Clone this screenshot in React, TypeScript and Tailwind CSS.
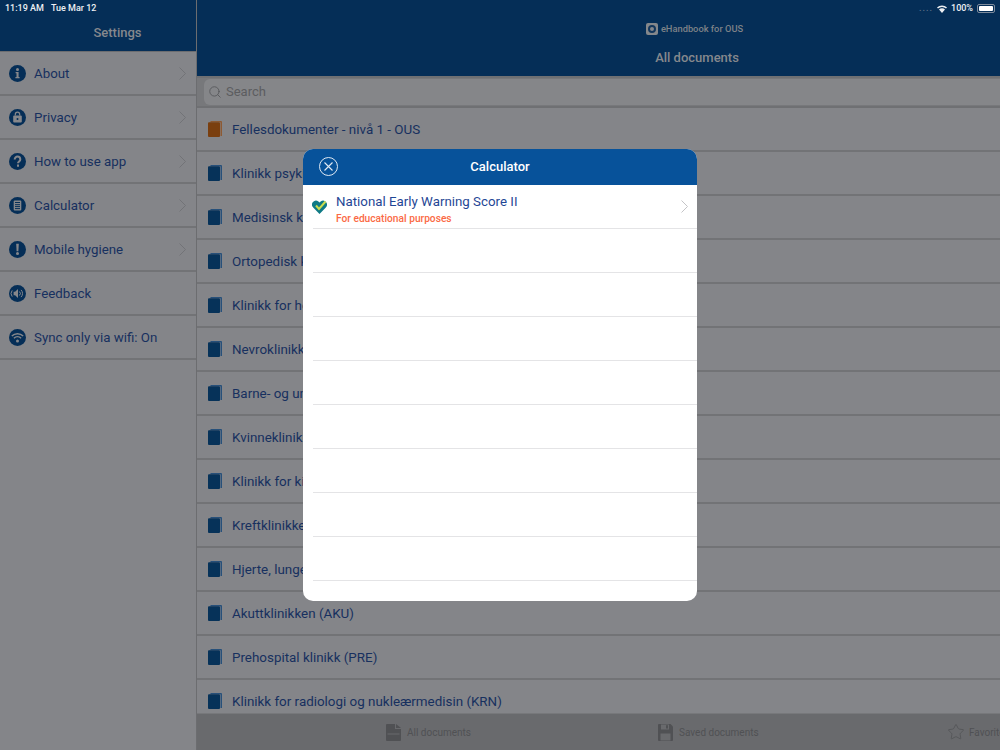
import { ReactNode } from 'react';
import { Search, Star } from 'lucide-react';

const font = { fontFamily: 'Roboto, "Liberation Sans", sans-serif' };

const InfoGlyph = () => (
	<>
		<circle cx="8.5" cy="4.6" r="1.5" fill="#86878b" />
		<path d="M6.6 7h3v4.9h1v1.3H6.4v-1.3h1.1V8.3h-.9z" fill="#86878b" />
	</>
);
const LockGlyph = () => (
	<>
		<rect x="4.2" y="6.6" width="8.6" height="6.8" rx="1" fill="#86878b" />
		<path d="M6.300 6.600V5.400a2.200 2.200 0 0 1 4.400 0V6.600" fill="none" stroke="#86878b" strokeWidth="1.2" />
		<circle cx="8.5" cy="10" r="1" fill="#052e57" />
	</>
);
const HelpGlyph = () => (
	<path
		d="M5.700 6.400a2.800 2.800 0 0 1 5.600 0c0 2-2.300 2-2.300 3.900M9 11.500v2.200"
		fill="none"
		stroke="#86878b"
		strokeWidth="2"
	/>
);
const CalcGlyph = () => (
	<>
		<rect x="4.7" y="3.4" width="7.6" height="10.2" rx="1" fill="#86878b" />
		<path d="M6 5.500h5M6 7.700h5M6 9.600h5M6 11.600h5" stroke="#052e57" strokeWidth="1" />
	</>
);
const AlertGlyph = () => (
	<>
		<path d="M7.200 2.800h2.600l-.4 7.400H7.600z" fill="#86878b" />
		<circle cx="8.500" cy="12.600" r="1.500" fill="#86878b" />
	</>
);
const SoundGlyph = () => (
	<>
		<path d="M4.600 6.700h1.500L9 4v9l-2.900-2.700H4.600z" fill="#86878b" />
		<path d="M10.400 6.500a2.700 2.700 0 0 1 0 4M12 4.900a5 5 0 0 1 0 7.200M3.200 5.400a5 5 0 0 0 0 6.200" fill="none" stroke="#86878b" strokeWidth="1" />
	</>
);
const WifiGlyph = () => (
	<>
		<path
			d="M2.800 7a8.200 8.200 0 0 1 11.400 0M4.900 9.200a5.200 5.200 0 0 1 7.200 0"
			fill="none"
			stroke="#86878b"
			strokeWidth="1.500"
		/>
		<circle cx="8.500" cy="12" r="1.500" fill="#86878b" />
	</>
);

const settings: { label: string; glyph: ReactNode; chevron: boolean }[] = [
	{ label: 'About', glyph: <InfoGlyph />, chevron: true },
	{ label: 'Privacy', glyph: <LockGlyph />, chevron: true },
	{ label: 'How to use app', glyph: <HelpGlyph />, chevron: true },
	{ label: 'Calculator', glyph: <CalcGlyph />, chevron: true },
	{ label: 'Mobile hygiene', glyph: <AlertGlyph />, chevron: true },
	{ label: 'Feedback', glyph: <SoundGlyph />, chevron: false },
	{ label: 'Sync only via wifi: On', glyph: <WifiGlyph />, chevron: false },
];

const documents = [
	'Fellesdokumenter - nivå 1 - OUS',
	'Klinikk psykisk helse og avhengighet',
	'Medisinsk klinikk',
	'Ortopedisk klinikk',
	'Klinikk for hode, hals og rekonstruktiv kirurgi',
	'Nevroklinikken',
	'Barne- og ungdomsklinikken',
	'Kvinneklinikken',
	'Klinikk for kirurgi, inflammasjonsmedisin og transplantasjon',
	'Kreftklinikken',
	'Hjerte, lunge- og karklinikken',
	'Akuttklinikken (AKU)',
	'Prehospital klinikk (PRE)',
	'Klinikk for radiologi og nukleærmedisin (KRN)',
];

const Chevron = ({ color }: { color: string }) => (
	<svg width="7" height="13" viewBox="0 0 7 13" className="shrink-0">
		<path d="M.5.5l6 6-6 6" fill="none" stroke={color} strokeWidth="1" />
	</svg>
);

const Book = ({ color, back }: { color: string; back: string }) => (
	<svg width="14" height="16" viewBox="0 0 14 16" className="shrink-0">
		<path d="M2.500 0h10.500a1 1 0 0 1 1 1v14h-1.500V1.300H2.500z" fill={back} />
		<rect x="0" y="1.300" width="12" height="14.700" rx="1" fill={color} />
	</svg>
);

const tabs = [
	{
		label: 'All documents',
		width: 'w-[272px]',
		icon: (
			<svg width="15" height="17" viewBox="0 0 15 17" className="shrink-0">
				<path d="M0 1a1 1 0 0 1 1-1h8v5h6v11a1 1 0 0 1-1 1H1a1 1 0 0 1-1-1z" fill="#505154" />
				<path d="M10 0l5 4h-5z" fill="#505154" />
				<path d="M1.500 10h12" stroke="#696a6d" strokeWidth="1" />
			</svg>
		),
	},
	{
		label: 'Saved documents',
		width: 'w-[289px]',
		icon: (
			<svg width="15" height="17" viewBox="0 0 15 17" className="shrink-0">
				<path d="M0 1a1 1 0 0 1 1-1h11.500L15 2.500V16a1 1 0 0 1-1 1H1a1 1 0 0 1-1-1z" fill="#505154" />
				<rect x="3" y="0.500" width="8" height="5" fill="#696a6d" />
				<rect x="8" y="1.200" width="2" height="3.300" fill="#505154" />
				<rect x="2.500" y="9.500" width="10" height="7" fill="#696a6d" />
			</svg>
		),
	},
	{
		label: 'Favorites',
		width: 'w-[200px]',
		icon: <Star size={18} strokeWidth={1} color="#505154" className="-mr-[2px] shrink-0" />,
	},
];

export default function App() {
	return (
		<div className="relative flex h-[750px] w-[1000px] overflow-hidden bg-[#848589]" style={font}>
			<aside className="flex w-[197px] shrink-0 flex-col border-r border-[#6c6d70] bg-[#848589]">
				<header className="flex h-[52px] items-end justify-center border-b border-[#6c6d70] bg-[#052e57] pb-[8px] pl-[39px]">
					<span className="text-[13px] font-medium leading-5 text-[#85888d]">Settings</span>
				</header>
				{settings.map((item) => (
					<div
						key={item.label}
						className="flex h-[44px] items-center border-b-2 border-[#727376] pl-[9px] pr-[10px]"
					>
						<svg width="17" height="17" viewBox="0 0 17 17" className="shrink-0">
							<circle cx="8.500" cy="8.500" r="8.500" fill="#052e57" />
							{item.glyph}
						</svg>
						<span className="ml-[8px] flex-1 whitespace-nowrap pt-[2px] text-[13.300px] text-[#17305f]">{item.label}</span>
						{item.chevron && <Chevron color="#727377" />}
					</div>
				))}
			</aside>

			<main className="flex w-[1000px] shrink-0 flex-col">
				<header className="flex h-[76px] shrink-0 flex-col items-center bg-[#052e57] pt-[22px]">
					<div className="flex h-[13px] items-center gap-[3px] pr-[5px]">
						<span className="flex h-[12px] w-[12px] items-center justify-center rounded-[2px] bg-[#84878b]">
							<span className="h-[8px] w-[8px] rounded-full border-2 border-[#12365c]" />
						</span>
						<span className="text-[9.300px] font-medium text-[#7e8287]">eHandbook for OUS</span>
					</div>
					<span className="mt-[13px] text-[13px] font-medium leading-5 text-[#85888d]">All documents</span>
				</header>
				<div className="flex h-[32px] shrink-0 items-center border-y-2 border-[#6f7073] bg-[#77787b] pl-[7px]">
					<div className="flex h-[26px] flex-1 items-center gap-[4px] rounded-[6px] bg-[#858689] pl-[4px]">
						<Search size={14} strokeWidth={1.500} color="#56575a" />
						<span className="text-[13px] leading-5 text-[#5c5d60]">Search</span>
					</div>
				</div>
				<div className="min-h-0 flex-1 overflow-hidden">
					{documents.map((doc, i) => (
						<div key={doc} className="flex h-[44px] items-center border-b-2 border-[#727376] pl-[11px]">
							<Book color={i === 0 ? '#7a3f0f' : '#063259'} back={i === 0 ? '#8d5a33' : '#27507a'} />
							<span className="ml-[10px] whitespace-nowrap pt-[3px] text-[13.400px] text-[#17305f]">{doc}</span>
						</div>
					))}
				</div>
				<nav className="flex h-[37px] shrink-0 border-t border-[#77787b] bg-[#696a6d] pl-[189px]">
					{tabs.map((tab) => (
						<div key={tab.label} className={`flex shrink-0 items-center gap-[6px] ${tab.width}`}>
							{tab.icon}
							<span className="whitespace-nowrap text-[10px] text-[#505154]">{tab.label}</span>
						</div>
					))}
				</nav>
			</main>

			{/* status bar sits over both columns */}
			<div className="absolute inset-x-0 top-0 flex h-[17px] items-center justify-between pl-[5px] pr-[5px] text-[9px] font-medium text-[#eef0f3]">
				<div className="flex gap-[7px]">
					<span>11:19 AM</span>
					<span>Tue Mar 12</span>
				</div>
				<div className="flex items-center gap-[4px]">
					<span className="tracking-[1px] text-[#5f7187]">....</span>
					<svg width="10" height="8" viewBox="0 0 10 8">
						<path d="M0 2.500a7 7 0 0 1 10 0L9 3.600a5.600 5.600 0 0 0-8 0z M2 4.500a4.200 4.200 0 0 1 6 0L5 8z" fill="#eef0f3" />
					</svg>
					<span>100%</span>
					<span className="flex h-[9px] w-[18px] rounded-[2px] border border-[#7d8b9c] p-px">
						<span className="flex-1 rounded-[1px] bg-white" />
					</span>
				</div>
			</div>

			{/* calculator dialog */}
			<div className="absolute left-[303px] top-[149px] flex h-[452px] w-[394px] flex-col overflow-hidden rounded-[10px] bg-white">
				<div className="relative flex h-[36px] shrink-0 items-center justify-center bg-[#07529a]">
					<svg width="19" height="19" viewBox="0 0 19 19" className="absolute left-[16px] top-[8px]">
						<circle cx="9.500" cy="9.500" r="9" fill="none" stroke="#dfe8f2" strokeWidth="1" />
						<path d="M5.500 5.500l8 8M13.500 5.500l-8 8" stroke="#dfe8f2" strokeWidth="1.100" />
					</svg>
					<span className="text-[13px] font-medium text-white">Calculator</span>
				</div>
				<div className="flex h-[43px] shrink-0 items-center pl-[9px] pr-[9px]">
					<svg width="16" height="15" viewBox="0 0 16 15" className="shrink-0">
						<path
							d="M7.500 15 1.200 8.600A3.900 3.900 0 0 1 1 3a3.900 3.900 0 0 1 5.400-.5L7.500 3.600 8.600 2.500A3.900 3.900 0 0 1 14 3a3.900 3.900 0 0 1-.2 5.600z"
							fill="#0f7a86"
						/>
						<path d="M4 6.500 7 10 13.500 2.500" fill="none" stroke="#c9dc4e" strokeWidth="2" />
					</svg>
					<div className="ml-[8px] flex-1 pt-[5px]">
						<div className="text-[13.300px] leading-[15px] text-[#1f4795]">National Early Warning Score II</div>
						<div className="mt-[4px] text-[10.200px] font-medium leading-[11px] text-[#fb6a45]">For educational purposes</div>
					</div>
					<Chevron color="#c4c4c7" />
				</div>
				{Array.from({ length: 9 }, (_, i) => (
					<div key={i} className="ml-[10px] h-[44px] shrink-0 border-t border-[#e4e4e6]" />
				))}
			</div>
		</div>
	);
}
